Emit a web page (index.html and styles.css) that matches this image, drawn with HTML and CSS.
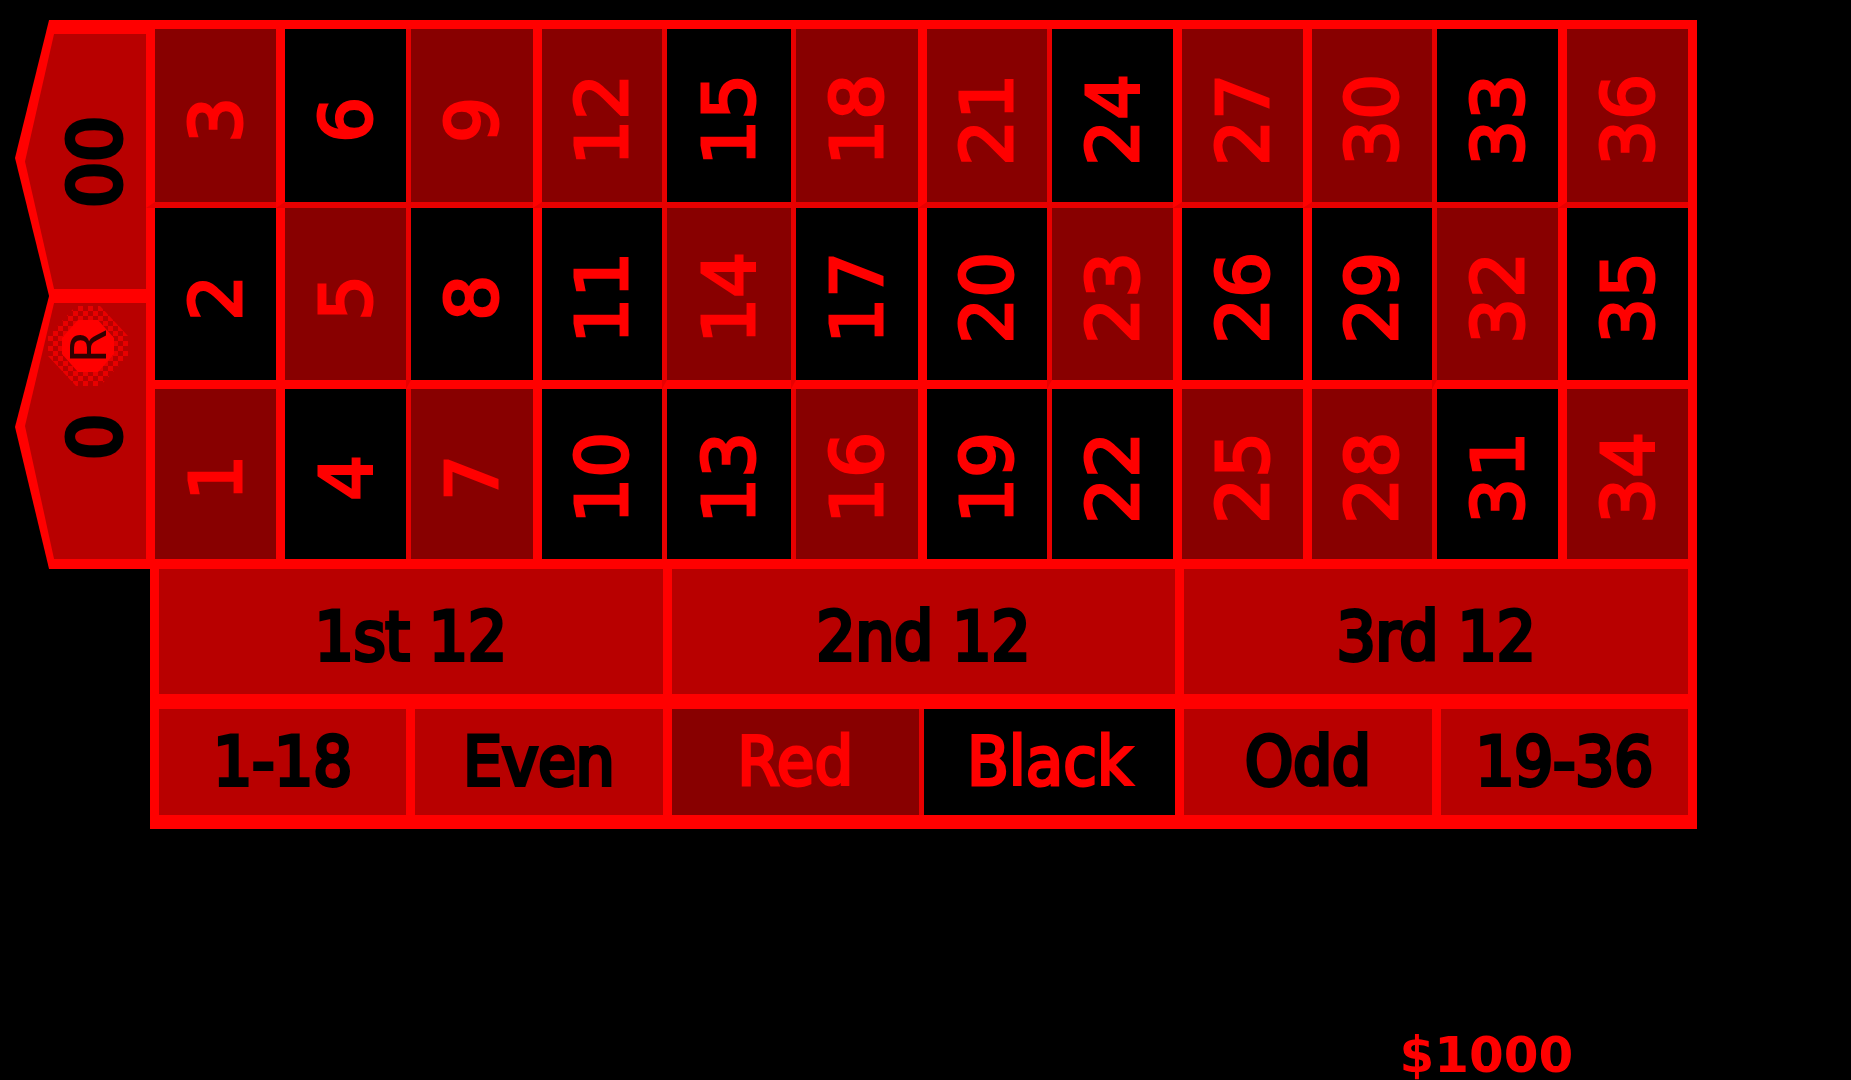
FILE: index.html
```html
<!DOCTYPE html>
<html lang="en">
<head>
    <meta charset="UTF-8">
    <meta name="viewport" content="width=device-width, initial-scale=1.0">
    <title>Roulette</title>
    <link rel="stylesheet" href="styles.css">
</head>
<body>
    <main class="board">
        <div class="inside">
            <div class="zeros">
                <button class="zero double"><span class="num">00</span></button>
                <button class="zero single">
                    <svg class="chip" viewBox="0 0 80 80" aria-hidden="true">
                        <defs>
                            <pattern id="dither" width="10" height="10" patternUnits="userSpaceOnUse">
                                <rect width="5" height="5" fill="#e80000"/>
                                <rect x="5" y="5" width="5" height="5" fill="#e80000"/>
                            </pattern>
                        </defs>
                        <path d="M28 0h24l28 30v20L52 80H28L0 50V30z" fill="url(#dither)"/>
                        <path d="M30 14h20l16 18v16L50 66H30L14 48V32z" fill="#f00"/>
                        <text x="40" y="40" transform="rotate(-90 40 40)" text-anchor="middle" dy="18">R</text>
                    </svg>
                    <span class="num">0</span>
                </button>
            </div>
            <div class="numbers">
                <div class="row">
                    <button class="red"><span class="num">3</span></button>
                    <button class="black"><span class="num">6</span></button>
                    <button class="red"><span class="num">9</span></button>
                    <button class="red"><span class="num">12</span></button>
                    <button class="black"><span class="num">15</span></button>
                    <button class="red"><span class="num">18</span></button>
                    <button class="red"><span class="num">21</span></button>
                    <button class="black"><span class="num">24</span></button>
                    <button class="red"><span class="num">27</span></button>
                    <button class="red"><span class="num">30</span></button>
                    <button class="black"><span class="num">33</span></button>
                    <button class="red"><span class="num">36</span></button>
                </div>
                <div class="row">
                    <button class="black"><span class="num">2</span></button>
                    <button class="red"><span class="num">5</span></button>
                    <button class="black"><span class="num">8</span></button>
                    <button class="black"><span class="num">11</span></button>
                    <button class="red"><span class="num">14</span></button>
                    <button class="black"><span class="num">17</span></button>
                    <button class="black"><span class="num">20</span></button>
                    <button class="red"><span class="num">23</span></button>
                    <button class="black"><span class="num">26</span></button>
                    <button class="black"><span class="num">29</span></button>
                    <button class="red"><span class="num">32</span></button>
                    <button class="black"><span class="num">35</span></button>
                </div>
                <div class="row">
                    <button class="red"><span class="num">1</span></button>
                    <button class="black"><span class="num">4</span></button>
                    <button class="red"><span class="num">7</span></button>
                    <button class="black"><span class="num">10</span></button>
                    <button class="black"><span class="num">13</span></button>
                    <button class="red"><span class="num">16</span></button>
                    <button class="black"><span class="num">19</span></button>
                    <button class="black"><span class="num">22</span></button>
                    <button class="red"><span class="num">25</span></button>
                    <button class="red"><span class="num">28</span></button>
                    <button class="black"><span class="num">31</span></button>
                    <button class="red"><span class="num">34</span></button>
                </div>
            </div>
        </div>
        <div class="outside">
            <div class="dozens">
                <button>1st 12</button>
                <button>2nd 12</button>
                <button>3rd 12</button>
            </div>
            <div class="halves">
                <button>1-18</button>
                <button>Even</button>
                <button class="red">Red</button>
                <button class="black">Black</button>
                <button>Odd</button>
                <button>19-36</button>
            </div>
        </div>
    </main>
    <footer class="bank">$1000</footer>
</body>
</html>
```
FILE: styles.css
```css
* {
    box-sizing: border-box;
}

body {
    display: flex;
    flex-direction: column;
    justify-content: space-between;
    min-height: 100vh;
    margin: 0;
    background-color: #000;
    color: #f00;
    font-family: "DejaVu Sans", Verdana, sans-serif;
}

button {
    display: flex;
    align-items: center;
    justify-content: center;
    min-width: 0;
    margin: 0;
    padding: 0;
    border: 0 solid #f00;
    background-color: #b80000;
    color: #000;
    font: inherit;
    cursor: pointer;
}

.board {
    padding: 20px 154px 0 15px;
}

.inside {
    display: flex;
}

/* numbers read from bottom to top */
.num {
    padding-bottom: 8px;
    writing-mode: vertical-rl;
    transform: rotate(180deg);
    font-size: 72px;
    line-height: 76px;
    -webkit-text-stroke: 3px currentColor;
}

.zeros {
    display: flex;
    flex: 0 0 131px;
    flex-direction: column;
}

.zero {
    position: relative;
    padding-left: 28px;
    background-color: #f00;
    clip-path: polygon(26% 0, 100% 0, 100% 100%, 26% 100%, 0 50%);
}

.zero::before {
    content: "";
    position: absolute;
    inset: 14px 0 7px 10px;
    background-color: #b80000;
    clip-path: polygon(24% 0, 100% 0, 100% 100%, 24% 100%, 0 50%);
}

.zero.double {
    height: 276px;
}

.zero.single {
    flex: 1;
    clip-path: polygon(26% 0, 100% 0, 100% 100%, 26% 100%, 0 48%);
}

.zero.single::before {
    inset: 7px 0 10px 10px;
    clip-path: polygon(24% 0, 100% 0, 100% 100%, 24% 100%, 0 48%);
}

.zero .num {
    position: relative;
    -webkit-text-stroke-width: 5px;
}

.chip {
    position: absolute;
    top: 10px;
    left: 33px;
    width: 80px;
    height: 80px;
}

.chip text {
    font-size: 50px;
    fill: #300000;
}

.numbers {
    flex: 1;
    border: solid #f00;
    border-width: 9px 9px 10px 0;
}

.row {
    display: grid;
    grid-template-columns: 130fr 130fr 127fr 129fr 129fr 127fr 129fr 126fr 130fr 129fr 126fr 130fr;
    height: 170px;
}

.row:nth-child(1) {
    height: 179px;
}

.row:nth-child(2) {
    height: 181px;
}

.row button {
    border-left-width: 9px;
}

.row:nth-child(1) button {
    border-bottom: 6px solid #e80000;
}

.row:nth-child(2) button {
    border-bottom-width: 9px;
}

.row button:nth-child(3),
.row button:nth-child(5),
.row button:nth-child(6),
.row button:nth-child(8),
.row button:nth-child(11) {
    border-left: 5px solid #e80000;
}

.outside {
    margin-left: 135px;
    border: solid #f00;
    border-width: 0 9px 14px 0;
    font-family: "DejaVu Sans Condensed", "DejaVu Sans", sans-serif;
    font-size: 68px;
    line-height: 80px;
}

.outside button {
    border-left-width: 9px;
    -webkit-text-stroke: 4px currentColor;
}

.dozens {
    display: grid;
    grid-template-columns: repeat(3, 1fr);
    height: 140px;
    border-bottom: 15px solid #f00;
}

.dozens button {
    padding-top: 10px;
}

.halves {
    display: grid;
    grid-template-columns: repeat(6, 1fr);
    height: 106px;
}

button.red {
    background-color: #880000;
    color: #f00;
}

button.black {
    background-color: #000;
    color: #f00;
}

.outside .red,
.outside .black {
    -webkit-text-stroke-width: 3px;
}

.halves .black {
    border-left: 5px solid #e80000;
}

.bank {
    padding-right: 15%;
    font-size: 50px;
    font-weight: bold;
    line-height: 50px;
    text-align: right;
}
```
